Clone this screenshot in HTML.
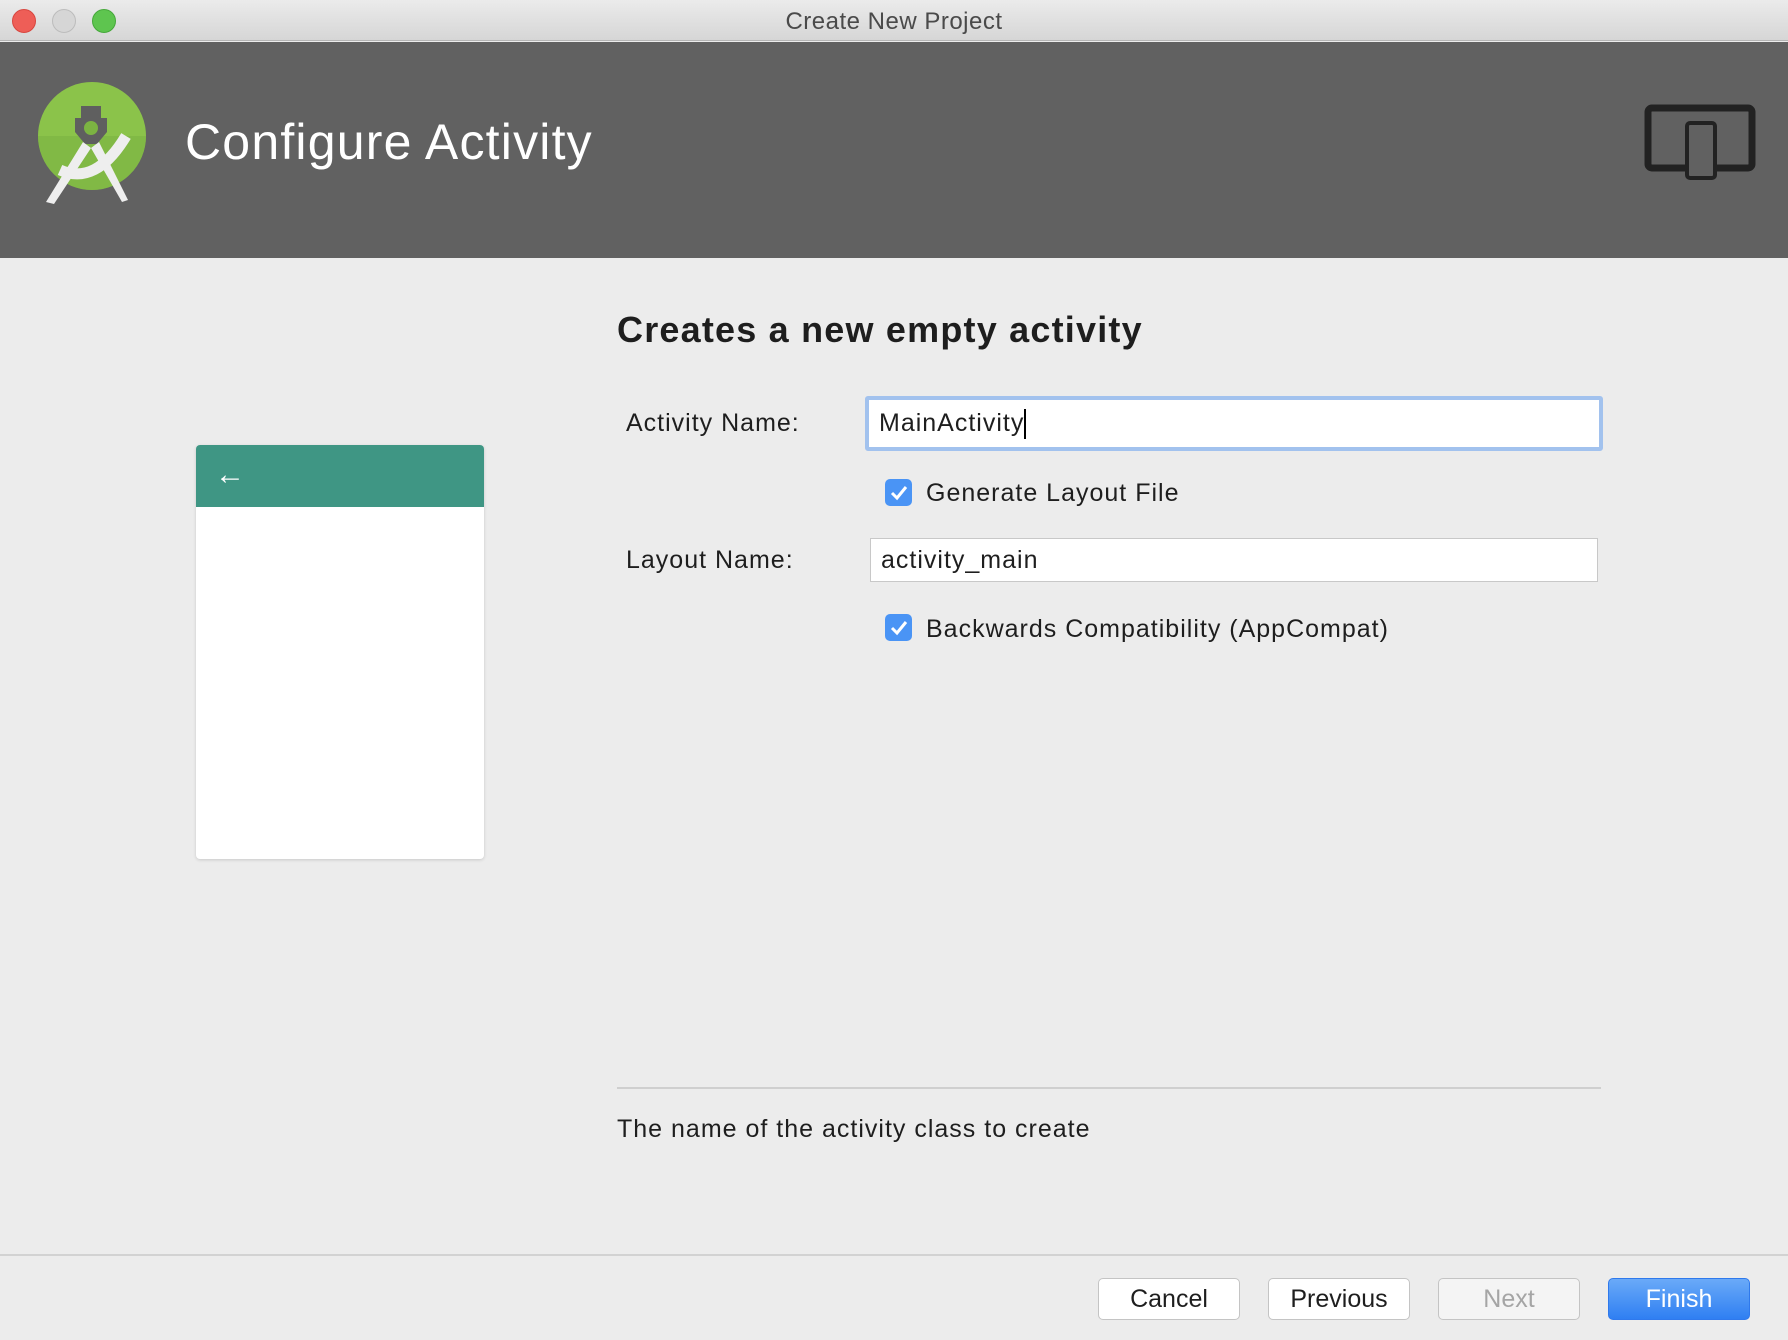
<!DOCTYPE html>
<html><head><meta charset="utf-8"><style>
*{margin:0;padding:0;box-sizing:border-box}
body{width:1788px;height:1340px;background:#ececec;font-family:"Liberation Sans",sans-serif;position:relative;overflow:hidden;color:#1e1e1e}
.abs{position:absolute}
#tb{left:0;top:0;width:1788px;height:41px;background:linear-gradient(#ebebeb,#d6d6d6);border-bottom:1px solid #b5b5b5}
.dot{top:9px;width:24px;height:24px;border-radius:50%}
#hdr{left:0;top:42px;width:1788px;height:216px;background:#616161}
.lbl{font-size:25px;color:#1e1e1e;letter-spacing:1px}
.inp{background:#fff;border:1px solid #c8c8c8;font-size:25px;padding-left:10px;display:flex;align-items:center;letter-spacing:1px}
.cb{width:27px;height:27px;border-radius:5px;background:#4a94f5;display:flex;align-items:center;justify-content:center}
.btn{top:1278px;height:42px;width:142px;border:1px solid #c4c4c4;border-radius:5px;background:#fff;font-size:25px;display:flex;align-items:center;justify-content:center}
</style></head><body>
<div id="tb" class="abs"></div>
<div class="abs dot" style="left:12px;background:#ee5e57;border:1px solid #d8463f"></div>
<div class="abs dot" style="left:52px;background:#d6d6d6;border:1px solid #bcbcbc"></div>
<div class="abs dot" style="left:92px;background:#5ec54f;border:1px solid #45a83a"></div>
<div class="abs" style="left:0;top:8px;width:1788px;text-align:center;font-size:24px;color:#4a4a4a;letter-spacing:.5px">Create New Project</div>
<div id="hdr" class="abs"></div>
<svg class="abs" style="left:36px;top:80px" width="115" height="125" viewBox="0 0 115 125">
<circle cx="56" cy="56" r="54" fill="#8bc34a"/>
<path d="M2 56 A54 54 0 0 0 110 56Z" fill="#7cb342" opacity=".6"/>
<rect x="45" y="26" width="20" height="14" fill="#5f5f5f"/>
<path d="M39 38 h32 v14 l-10 12 h-12 l-10 -12z" fill="#5f5f5f"/>
<circle cx="55" cy="48" r="7" fill="#7cb342"/>
<path d="M47 62 L10 122 L18 124 L55 68Z M63 62 L92 120 L86 122 L55 68Z" fill="#eee"/>
<path d="M24 90 Q60 106 90 56" stroke="#eee" stroke-width="11" fill="none"/>
</svg>
<div class="abs" style="left:185px;top:113px;font-size:50px;color:#fff;letter-spacing:1.2px">Configure Activity</div>
<svg class="abs" style="left:1644px;top:104px" width="114" height="76">
<rect x="4" y="4" width="104" height="60" rx="4" fill="none" stroke="#222" stroke-width="7"/>
<rect x="43" y="19" width="28" height="55" rx="3" fill="#616161" stroke="#222" stroke-width="4"/>
</svg>
<div class="abs" style="left:617px;top:309px;font-size:36px;font-weight:bold;letter-spacing:1.2px">Creates a new empty activity</div>
<div class="abs" style="left:196px;top:445px;width:288px;height:414px;background:#fff;border-radius:4px;box-shadow:0 1px 3px rgba(0,0,0,.15)"></div>
<div class="abs" style="left:196px;top:445px;width:288px;height:62px;background:#3f9684;border-radius:4px 4px 0 0"></div>
<div class="abs" style="left:215px;top:458px;color:#fff;font-size:30px">←</div>
<div class="abs lbl" style="left:626px;top:409px">Activity Name:</div>
<div class="abs inp" style="left:865px;top:396px;width:738px;height:55px;border:4px solid #a2c2ee;border-radius:3px">MainActivity<span style="display:inline-block;width:2px;height:30px;background:#000"></span></div>
<div class="abs cb" style="left:885px;top:479px"><svg width="18" height="16"><path d="M2 8 L7 13 L16 2" stroke="#fff" stroke-width="3" fill="none"/></svg></div>
<div class="abs lbl" style="left:926px;top:479px">Generate Layout File</div>
<div class="abs lbl" style="left:626px;top:546px">Layout Name:</div>
<div class="abs inp" style="left:870px;top:538px;width:728px;height:44px">activity_main</div>
<div class="abs cb" style="left:885px;top:614px"><svg width="18" height="16"><path d="M2 8 L7 13 L16 2" stroke="#fff" stroke-width="3" fill="none"/></svg></div>
<div class="abs lbl" style="left:926px;top:615px">Backwards Compatibility (AppCompat)</div>
<div class="abs" style="left:617px;top:1087px;width:984px;height:2px;background:#cfcfcf"></div>
<div class="abs lbl" style="left:617px;top:1115px">The name of the activity class to create</div>
<div class="abs" style="left:0;top:1254px;width:1788px;height:2px;background:#d2d2d2"></div>
<div class="abs btn" style="left:1098px">Cancel</div>
<div class="abs btn" style="left:1268px">Previous</div>
<div class="abs btn" style="left:1438px;color:#a5a5a5;background:#f4f4f4">Next</div>
<div class="abs btn" style="left:1608px;color:#fff;background:linear-gradient(#6aaaf8,#2f7ff2);border-color:#2f79ec">Finish</div>
</body></html>
